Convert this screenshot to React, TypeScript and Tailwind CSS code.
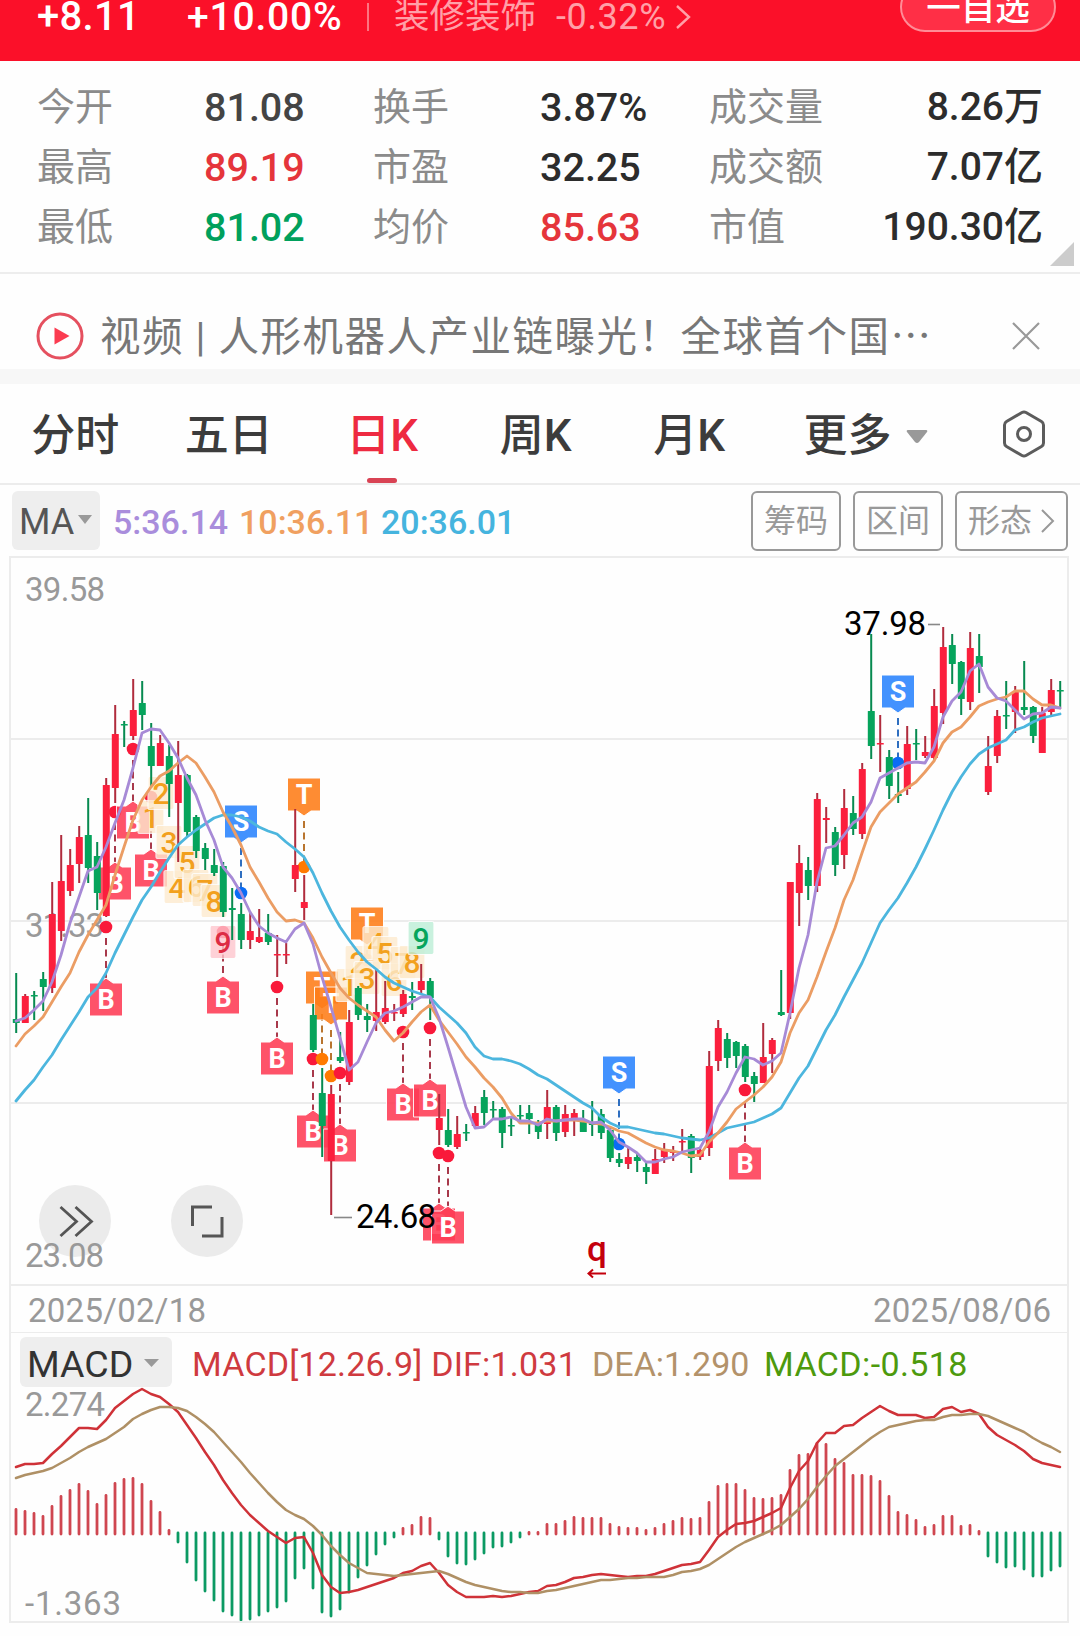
const RED = "#fb1f3d"
const GREEN = "#06a45c"

// x of the n-th trading day
const px = (i: number) => 16 + 9 * i

// colour, high, body top, body bottom, low
const candles: [string, number, number, number, number][] = [
    ["g", 973, 1019, 1023, 1033], ["r", 994, 996, 1023, 1023], ["g", 991, 995, 996, 1020], ["g", 972, 979, 987, 1011],
    ["r", 882, 914, 988, 993], ["r", 835, 881, 931, 941], ["r", 849, 865, 891, 896], ["r", 826, 837, 864, 883],
    ["g", 798, 835, 868, 883], ["g", 842, 856, 893, 910], ["r", 778, 785, 916, 917], ["r", 705, 734, 788, 803],
    ["g", 721, 724, 725, 747], ["r", 679, 710, 736, 740], ["g", 681, 703, 715, 730], ["g", 723, 746, 766, 787],
    ["r", 735, 743, 766, 766], ["g", 745, 756, 784, 817], ["r", 741, 775, 803, 862], ["g", 774, 775, 832, 837],
    ["g", 815, 817, 851, 858], ["g", 843, 848, 859, 870], ["g", 849, 865, 873, 876], ["g", 862, 866, 912, 917],
    ["g", 888, 908, 910, 940], ["g", 903, 914, 940, 949], ["r", 913, 931, 940, 949], ["r", 909, 937, 942, 943],
    ["g", 914, 933, 942, 945], ["r", 935, 954, 955, 977], ["r", 943, 954, 955, 964], ["r", 809, 865, 879, 892],
    ["r", 875, 902, 908, 920], ["g", 1004, 1015, 1050, 1052], ["g", 1068, 1093, 1126, 1157], ["r", 1085, 1094, 1161, 1215],
    ["g", 1032, 1057, 1061, 1063], ["r", 1010, 1022, 1082, 1085], ["g", 986, 988, 1015, 1020], ["g", 1004, 1016, 1020, 1032],
    ["r", 970, 1012, 1021, 1031], ["r", 981, 1008, 1022, 1024], ["r", 1004, 1012, 1013, 1021], ["r", 990, 994, 1014, 1017],
    ["g", 982, 996, 998, 1010], ["r", 964, 981, 990, 993], ["g", 978, 981, 998, 1020], ["r", 1094, 1118, 1130, 1145],
    ["g", 1109, 1130, 1145, 1147], ["r", 1116, 1134, 1147, 1149], ["g", 1124, 1132, 1133, 1141], ["r", 1106, 1113, 1126, 1128],
    ["g", 1090, 1097, 1113, 1125], ["g", 1101, 1109, 1110, 1120], ["g", 1107, 1109, 1133, 1148], ["g", 1118, 1125, 1126, 1136],
    ["g", 1105, 1115, 1116, 1123], ["g", 1105, 1113, 1119, 1134], ["g", 1120, 1122, 1132, 1139], ["r", 1090, 1107, 1124, 1139],
    ["g", 1105, 1107, 1133, 1141], ["r", 1105, 1114, 1132, 1137], ["r", 1109, 1113, 1120, 1136], ["g", 1110, 1120, 1132, 1132],
    ["g", 1101, 1123, 1125, 1136], ["g", 1109, 1114, 1133, 1139], ["g", 1127, 1130, 1158, 1162], ["g", 1153, 1159, 1163, 1167],
    ["r", 1147, 1157, 1164, 1169], ["g", 1153, 1157, 1161, 1172], ["g", 1162, 1167, 1172, 1184], ["r", 1149, 1159, 1174, 1174],
    ["r", 1143, 1149, 1157, 1163], ["r", 1146, 1151, 1153, 1161], ["r", 1129, 1141, 1142, 1153], ["g", 1134, 1136, 1158, 1173],
    ["r", 1147, 1150, 1157, 1160], ["r", 1051, 1066, 1148, 1156], ["r", 1020, 1028, 1061, 1071], ["g", 1033, 1039, 1058, 1068],
    ["g", 1041, 1042, 1056, 1068], ["g", 1044, 1046, 1077, 1082], ["g", 1072, 1076, 1084, 1102], ["r", 1023, 1057, 1083, 1083],
    ["r", 1038, 1040, 1054, 1073], ["g", 970, 1012, 1015, 1016], ["r", 882, 882, 1013, 1019], ["r", 845, 863, 893, 926],
    ["g", 857, 870, 886, 900], ["r", 793, 799, 886, 892], ["r", 807, 818, 820, 843], ["g", 827, 832, 865, 876],
    ["r", 789, 808, 855, 869], ["g", 796, 813, 829, 835], ["r", 763, 769, 834, 839], ["g", 634, 711, 746, 759],
    ["r", 715, 743, 744, 772], ["g", 750, 757, 786, 799], ["g", 772, 794, 796, 803], ["r", 726, 744, 789, 795],
    ["g", 729, 743, 744, 760], ["r", 736, 752, 756, 758], ["r", 689, 706, 758, 760], ["r", 627, 647, 713, 724],
    ["g", 634, 645, 664, 684], ["g", 661, 662, 699, 715], ["r", 632, 648, 702, 710], ["g", 634, 656, 667, 693],
    ["r", 736, 766, 792, 795], ["r", 710, 716, 756, 763], ["g", 681, 715, 716, 729], ["r", 686, 692, 712, 733],
    ["g", 661, 707, 710, 715], ["g", 706, 707, 736, 743], ["r", 707, 713, 753, 753], ["r", 679, 690, 712, 717],
    ["g", 681, 690, 691, 707],
]

const ma5 = [
    1021, 1018, 1010, 1001, 982, 955, 923, 897, 871, 867, 847, 823, 800, 768, 733, 729, 730, 743, 758, 778,
    795, 820, 840, 867, 878, 893, 912, 926, 933, 938, 942, 929, 923, 944, 977, 1007, 1038, 1070, 1062, 1042,
    1023, 1013, 1011, 1007, 1002, 997, 997, 1018, 1047, 1077, 1107, 1128, 1127, 1119, 1119, 1117, 1121, 1121, 1125, 1119,
    1121, 1120, 1119, 1119, 1123, 1122, 1130, 1142, 1147, 1153, 1162, 1162, 1159, 1157, 1152, 1150, 1148, 1132, 1107, 1092,
    1073, 1057, 1059, 1065, 1061, 1053, 1013, 968, 935, 882, 848, 846, 835, 823, 817, 802, 778, 773, 768, 763,
    762, 763, 747, 717, 701, 692, 671, 664, 687, 698, 701, 710, 719, 714, 713, 707, 708,
]

const ma10 = [
    1046, 1034, 1026, 1017, 1002, 987, 973, 952, 935, 920, 905, 875, 847, 820, 800, 787, 776, 771, 763, 756,
    763, 777, 792, 812, 827, 845, 867, 882, 898, 912, 921, 920, 923, 938, 957, 973, 988, 998, 1005, 1011,
    1017, 1030, 1041, 1033, 1022, 1012, 1005, 1020, 1032, 1044, 1057, 1067, 1078, 1087, 1098, 1113, 1123, 1123, 1123, 1121,
    1121, 1120, 1120, 1121, 1123, 1124, 1127, 1131, 1133, 1138, 1143, 1147, 1150, 1151, 1153, 1156, 1155, 1142, 1133, 1122,
    1109, 1102, 1095, 1087, 1077, 1062, 1033, 1013, 1000, 977, 952, 928, 900, 880, 853, 827, 812, 803, 794, 788,
    782, 772, 761, 743, 732, 727, 717, 706, 702, 699, 697, 691, 691, 699, 705, 705, 708,
]

const ma20 = [
    1101, 1090, 1080, 1067, 1055, 1040, 1026, 1012, 997, 988, 973, 953, 935, 917, 900, 887, 872, 858, 845, 837,
    830, 824, 818, 815, 815, 817, 821, 827, 831, 834, 842, 849, 857, 873, 893, 911, 927, 940, 952, 962,
    969, 977, 983, 987, 991, 994, 997, 1007, 1015, 1023, 1033, 1047, 1056, 1059, 1059, 1061, 1064, 1069, 1075, 1079,
    1085, 1091, 1097, 1103, 1108, 1117, 1123, 1127, 1127, 1129, 1131, 1133, 1134, 1136, 1138, 1139, 1140, 1138, 1133, 1128,
    1126, 1124, 1122, 1118, 1114, 1108, 1093, 1078, 1066, 1048, 1030, 1015, 997, 980, 963, 943, 923, 910, 898, 883,
    867, 849, 830, 810, 792, 777, 764, 754, 748, 744, 740, 730, 727, 722, 718, 716, 714,
]

const macd = [
    26, 24, 22, 19, 29, 39, 45, 51, 44, 31, 40, 52, 56, 57, 51, 34, 23, 5,
    -11, -31, -49, -60, -69, -80, -84, -89, -88, -84, -80, -76, -70, -47, -37, -57, -81, -85, -78, -61, -46, -34, -23, -13, -6,
    7, 10, 18, 17, -8, -25, -32, -33, -28, -22, -16, -15, -11, -6,
    3, 3, 11, 11, 14, 18, 17, 17, 17, 11, 8, 7, 7, 5, 7, 11, 14, 17, 16, 17, 33, 49, 51, 51, 45, 37, 36, 37, 40, 65, 80, 81, 92, 91,
    76, 72, 60, 60, 59, 54, 39, 23, 20, 15, 8, 10, 19, 19, 9, 10, 4,
    -25, -31, -36, -35, -38, -45, -45, -39, -35,
]

const dif = [
    1467, 1464, 1464, 1463, 1454, 1446, 1437, 1428, 1428, 1429, 1420, 1408, 1401, 1394, 1389, 1394, 1397, 1404, 1412, 1425,
    1438, 1452, 1465, 1480, 1493, 1505, 1515, 1523, 1531, 1537, 1543, 1538, 1537, 1553, 1575, 1587, 1593, 1592, 1590, 1587,
    1584, 1581, 1578, 1573, 1571, 1566, 1563, 1573, 1585, 1592, 1597, 1597, 1597, 1596, 1597, 1596, 1594, 1592, 1591, 1586,
    1585, 1582, 1578, 1577, 1575, 1574, 1575, 1576, 1577, 1576, 1576, 1574, 1571, 1568, 1565, 1564, 1562, 1550, 1537, 1530,
    1524, 1523, 1521, 1517, 1513, 1508, 1488, 1471, 1461, 1443, 1433, 1433, 1426, 1425, 1418, 1412, 1406, 1411, 1415, 1415,
    1415, 1418, 1417, 1409, 1407, 1412, 1410, 1414, 1427, 1435, 1440, 1445, 1451, 1459, 1463, 1465, 1467,
]

const dea = [
    1478, 1475, 1473, 1471, 1468, 1463, 1458, 1452, 1447, 1443, 1439, 1433, 1427, 1419, 1414, 1410, 1407, 1407, 1408, 1411,
    1417, 1424, 1432, 1442, 1452, 1462, 1473, 1483, 1493, 1502, 1510, 1515, 1519, 1526, 1535, 1546, 1555, 1563, 1568, 1573,
    1574, 1575, 1576, 1575, 1574, 1573, 1572, 1571, 1574, 1578, 1582, 1585, 1587, 1589, 1591, 1592, 1592, 1593, 1593, 1591,
    1590, 1588, 1586, 1584, 1582, 1580, 1580, 1579, 1578, 1578, 1577, 1577, 1577, 1575, 1572, 1571, 1569, 1565, 1559, 1553,
    1547, 1542, 1538, 1534, 1530, 1525, 1517, 1509, 1499, 1487, 1476, 1466, 1459, 1452, 1445, 1438, 1432, 1427, 1425, 1423,
    1421, 1420, 1420, 1417, 1415, 1415, 1414, 1414, 1416, 1420, 1424, 1428, 1432, 1438, 1443, 1447, 1452,
]

// kind, centre x, badge top, y of the dot it points at
const marks: [string, number, number, number][] = [
    ["B", 106, 983, 927], ["B", 115, 867, 812], ["B", 133, 806, 749], ["B", 151, 854, 797], ["B", 223, 981, 932],
    ["S", 241, 805, 893], ["T", 304, 778, 867], ["B", 277, 1042, 987], ["B", 313, 1115, 1059], ["T", 322, 971, 1059],
    ["T", 331, 987, 1076], ["B", 340, 1129, 1073], ["T", 367, 907, 960], ["B", 403, 1088, 1032], ["B", 430, 1084, 1028],
    ["B", 439, 1208, 1153], ["B", 448, 1211, 1156], ["S", 619, 1056, 1144], ["B", 745, 1147, 1090], ["S", 898, 675, 763],
]

const markColors: any = {
    B: { box: "#ff3c55", dot: "#f9193a", line: "#a8394b" },
    S: { box: "#2a84ff", dot: "#0a6cf5", line: "#2f6fc0" },
    T: { box: "#ff7d18", dot: "#ff7a00", line: "#b9752f" },
}

const counts: [string, number, number][] = [
    ["1", 151, 817], ["2", 161, 793], ["3", 169, 842], ["4", 177, 887], ["5", 187, 862], ["6", 196, 886], ["7", 205, 890], ["8", 214, 901], ["9", 223, 942],
    ["1", 349, 985], ["2", 358, 962], ["3", 367, 978], ["4", 376, 943], ["5", 385, 953], ["6", 394, 980], ["7", 403, 963], ["8", 412, 962], ["9", 421, 938],
]

function Label({ x, y, w, color = "#999", children }: { x: number, y: number, w: number, color?: string, children: string }) {
    return <text x={x} y={y} textLength={w} lengthAdjust="spacing" fill={color} className="text-[33px]">{children}</text>
}

function Line({ data, color, width = 2.8 }: { data: number[], color: string, width?: number }) {
    return <polyline points={data.map((y, i) => `${px(i)},${y}`).join(" ")} fill="none" stroke={color} strokeWidth={width} strokeLinejoin="round" strokeLinecap="round" />
}

function Mark({ kind, x, top, dot }: { kind: string, x: number, top: number, dot: number }) {
    const c = markColors[kind]
    const below = kind === "B"
    return <g>
        <line x1={x} x2={x} y1={below ? dot + 11 : top + 43} y2={below ? top - 5 : dot - 6} stroke={c.line} strokeWidth="2" strokeDasharray="7 4.5" />
        <circle cx={x} cy={dot} r="6.3" fill={c.dot} />
        <path
            d={below
                ? `M${x - 16.5} ${top}h9.500l7 -5l7 5h9.500v33h-33z`
                : `M${x - 16.5} ${top}h33v33h-9.500l-7 5l-7 -5h-9.500z`}
            fill={c.box} stroke="#fff" strokeWidth="1" strokeLinejoin="round" opacity="0.88" />
        <text x={x} y={top + 25.5} textAnchor="middle" fill="#fff" className="text-[27px] font-bold">{kind}</text>
    </g>
}

function Count({ n, x, y }: { n: string, x: number, y: number }) {
    let box = "#fdebcf"
    let color = "#f2a01d"
    if (n === "9") {
        box = y < 940 ? "#bdeed7" : "#ffc6ce"
        color = y < 940 ? "#06a45c" : "#dd2b43"
    }
    return <g>
        <rect x={x - 13} y={y - 16.5} width="26" height="33" rx="2" fill={box} stroke="#fff" strokeWidth="1.2" opacity="0.8" />
        <text x={x} y={y + 10.5} textAnchor="middle" fill={color} className="text-[30px] font-medium">{n}</text>
    </g>
}

function PriceChart() {
    return <svg viewBox="11 558 1056 726" className="block w-[1056px] h-[726px]">
        {[739, 921, 1103].map(y => <line key={y} x1="11" x2="1067" y1={y} y2={y} stroke="#ececec" strokeWidth="2" />)}
        <Label x={25} y={601} w={80}>39.58</Label>
        <Label x={25} y={937} w={79}>31.33</Label>
        {marks.map(([kind, x, top, dot], i) => <Mark key={i} kind={kind} x={x} top={top} dot={dot} />)}
        {counts.map(([n, x, y], i) => <Count key={i} n={n} x={x} y={y} />)}
        {candles.map(([c, high, top, bottom, low], i) => <g key={i} fill={c === "r" ? RED : GREEN}>
            <rect x={px(i) - 0.8} y={high} width="2" height={low - high} fill={c === "r" ? "#b02c3d" : "#078a50"} />
            <rect x={px(i) - 3.2} y={top} width="7" height={Math.max(bottom - top, 1.5)} rx="0.5" />
        </g>)}
        <Line data={ma20} color="#4cb6de" />
        <Line data={ma10} color="#eb9d64" />
        <Line data={ma5} color="#a78ad6" />
        <line x1="928" x2="940" y1="624.5" y2="624.5" stroke="#888" strokeWidth="1.6" />
        <Label x={844} y={635} w={82} color="#000">37.98</Label>
        <line x1="334" x2="352" y1="1217.5" y2="1217.5" stroke="#888" strokeWidth="1.6" />
        <Label x={356} y={1228} w={80} color="#000">24.68</Label>
        <text x="587" y="1261" fill="#c4000c" className="text-[35px] font-medium">q</text>
        <path d="M606 1273.500H589M593 1269.500l-4.500 4l4.500 4" fill="none" stroke="#c4000c" strokeWidth="2" />
        <circle cx="75" cy="1221" r="36" fill="#ebebeb" />
        <path d="M60.500 1207l16 14.500l-16 14.500M75.500 1207l16 14.500l-16 14.500" fill="none" stroke="#555" strokeWidth="2.800" />
        <circle cx="207" cy="1221" r="36" fill="#ebebeb" />
        <path d="M192.500 1226v-19h19.500M202 1236h20v-19" fill="none" stroke="#555" strokeWidth="3" />
        <Label x={25} y={1267} w={79}>23.08</Label>
    </svg>
}

function MacdChart() {
    return <svg viewBox="11 1387 1056 234" className="block w-[1056px] h-[234px]">
        <Label x={25} y={1416} w={80}>2.274</Label>
        <Label x={25} y={1615} w={96}>-1.363</Label>
        {macd.map((v, i) => <line key={i} x1={px(i)} x2={px(i)} y1={v > 0 ? 1534 : 1533} y2={v > 0 ? 1535.5 - v : 1531 - v} stroke={v > 0 ? "#cf4650" : "#0b9a63"} strokeWidth="2.8" strokeLinecap="round" />)}
        <Line data={dif} color="#cf3238" width={2.5} />
        <Line data={dea} color="#af9065" width={2.5} />
    </svg>
}

function Quote({ label, value, color = "text-[#2c2c2c]", right = false }: { label: string, value: string, color?: string, right?: boolean }) {
    return <div className="flex items-center h-[60px]">
        <span className={right ? "w-[140px] text-[38px] text-[#8b8b8b]" : "w-[167px] text-[38px] text-[#8b8b8b]"}>{label}</span>
        <span className={`${color} ${right ? "flex-1 text-right text-[39px]" : "text-[39.500px]"} pt-px font-medium whitespace-nowrap`}>{value}</span>
    </div>
}

const tabs = ["分时", "五日", "日K", "周K", "月K"]

export default function App() {

    return <div className="w-[1080px] h-[1636px] overflow-hidden bg-[#fefefe] font-['Roboto','Noto_Sans_CJK_SC',sans-serif] leading-none">
        <div className="flex items-start h-[61px] bg-[#fb1029] text-white overflow-hidden">
            <div className="flex items-center w-[900px] h-[34px] pl-[37px] whitespace-nowrap">
                <span className="w-[150px] text-[40px] font-medium tracking-[0.3px]">+8.11</span>
                <span className="w-[180px] text-[39px] font-medium tracking-[0.8px]">+10.00%</span>
                <span className="w-[2px] h-7 bg-[#fd7480]"></span>
                <span className="ml-[25px] w-[162px] text-[35.500px] text-[#ffa0a8]">装修装饰</span>
                <span className="text-[36px] tracking-[0.6px] text-[#ffa0a8]">-0.32%</span>
                <svg viewBox="0 0 16 26" className="ml-[9px] w-4 h-[26px]"><path d="M2 2l12 11L2 24" fill="none" stroke="#ffa0a8" strokeWidth="2.4" /></svg>
            </div>
            <div className="flex items-center justify-center w-[156px] h-[50px] -mt-[18px] pt-[3px] rounded-full border-2 border-[#ff8c97] bg-[#ff2f46] text-[34.500px] font-medium">一自选</div>
        </div>

        <div className="relative h-[213px] pt-[16px] px-[37px] border-b-2 border-[#ededed]">
            <div className="grid grid-cols-[336px_336px_334px]">
                <Quote label="今开" value="81.08" color="text-[#444]" />
                <Quote label="换手" value="3.87%" />
                <Quote label="成交量" value="8.26万" right />
                <Quote label="最高" value="89.19" color="text-[#e5353b]" />
                <Quote label="市盈" value="32.25" />
                <Quote label="成交额" value="7.07亿" right />
                <Quote label="最低" value="81.02" color="text-[#00a05c]" />
                <Quote label="均价" value="85.63" color="text-[#e5353b]" />
                <Quote label="市值" value="190.30亿" right />
            </div>
            <svg viewBox="0 0 24 24" className="absolute left-[1050px] top-[181px] w-6 h-6"><path d="M24 0v24H0z" fill="#ccc" /></svg>
        </div>

        <div className="flex items-center h-[95px] pt-[28px] pl-[36px] whitespace-nowrap">
            <svg viewBox="0 0 48 48" className="w-12 h-12">
                <circle cx="24" cy="24" r="22" fill="none" stroke="#e5505f" strokeWidth="3" />
                <path d="M18.500 15.500v17l15 -8.500z" fill="#fb3b50" />
            </svg>
            <span className="ml-4 w-[912px] text-[40.500px] tracking-[1.5px] text-[#777]">视频 | 人形机器人产业链曝光！全球首个国<span className="font-['Noto_Sans_CJK_SC']">…</span></span>
            <svg viewBox="0 0 28 28" className="w-7 h-7"><path d="M1 1l26 26M27 1L1 27" stroke="#999" strokeWidth="2.2" /></svg>
        </div>
        <div className="h-[15px] bg-[#f7f7f7]"></div>

        <div className="flex h-[101px] border-b-2 border-[#ececec] text-[#3c3c3c] text-[44px] font-medium">
            {tabs.map(t => <div key={t} className={t === "日K" ? "relative flex items-center justify-center w-[153.500px] pt-[5px] pr-[3px] text-[#ee2a41]" : "flex items-center justify-center w-[153.500px] pt-[5px] pr-[3px]"}>
                {t}
                {t === "日K" && <span className="absolute bottom-0 w-[30px] h-[5px] rounded-sm bg-[#d94354]"></span>}
            </div>)}
            <div className="flex items-center w-[234px] pl-[36px] pt-[5px]">
                更多
                <svg viewBox="0 0 22 13" className="ml-[14px] w-[22px] h-[13px]"><path d="M2 0h18q2 0 1 2l-8 10q-2 2-4 0l-8-10q-1-2 1-2z" fill="#999" /></svg>
            </div>
            <div className="flex items-center">
                <svg viewBox="0 0 44 48" className="w-11 h-12" fill="none" stroke="#5c5c5c" strokeWidth="3">
                    <path d="M20 2.500q2-1.200 4 0l15.500 9q2 1.200 2 3.500v18q0 2.300-2 3.500l-15.500 9q-2 1.200-4 0l-15.500-9q-2-1.200-2-3.500v-18q0-2.300 2-3.500z" />
                    <circle cx="22" cy="24" r="6.500" />
                </svg>
            </div>
        </div>

        <div className="flex items-center h-[71px] pl-3 pr-3 whitespace-nowrap">
            <div className="flex items-center w-[88px] h-[59px] pl-[7px] pt-[2px] rounded-md bg-[#eee] text-[36px] text-[#555]">
                MA
                <svg viewBox="0 0 14 9" className="ml-1 mb-1 w-[14px] h-[9px]"><path d="M0 0h14l-7 9z" fill="#999" /></svg>
            </div>
            <span className="ml-[13px] w-[126px] pt-[3px] text-[34px] font-medium text-[#a98ddc]">5:36.14</span>
            <span className="w-[142px] pt-[3px] text-[34px] font-medium text-[#f0a060]">10:36.11</span>
            <span className="flex-1 pt-[3px] text-[34px] font-medium text-[#45b4de]">20:36.01</span>
            <div className="flex gap-3 text-[32px] text-[#999]">
                <div className="flex items-center justify-center w-[90px] h-[60px] rounded-md border-2 border-[#999]">筹码</div>
                <div className="flex items-center justify-center w-[90px] h-[60px] rounded-md border-2 border-[#999]">区间</div>
                <div className="flex items-center justify-center w-[113px] h-[60px] rounded-md border-2 border-[#999]">
                    形态
                    <svg viewBox="0 0 14 24" className="ml-[9px] w-[14px] h-6"><path d="M1 1l11 11L1 23" fill="none" stroke="#999" strokeWidth="2" /></svg>
                </div>
            </div>
        </div>

        <div className="ml-[9px] w-[1060px] border-2 border-[#ececec]">
            <PriceChart />
            <div className="h-[49px] border-t-2 border-b border-[#ececec]">
                <svg viewBox="11 1286 1056 46" className="block w-[1056px] h-[46px]">
                    <Label x={28} y={1322} w={178}>2025/02/18</Label>
                    <Label x={873} y={1322} w={178}>2025/08/06</Label>
                </svg>
            </div>
            <div className="flex items-center h-[54px] pl-[9px] pt-[4px] pb-0 whitespace-nowrap text-[34px]">
                <div className="flex items-center w-[152px] h-[50px] pl-[7px] pt-[5px] rounded-md bg-[#eee] text-[37.500px] text-[#333]">
                    MACD
                    <svg viewBox="0 0 15 8" className="ml-[11px] mb-1 w-[15px] h-2"><path d="M0 0h15l-7.500 8z" fill="#999" /></svg>
                </div>
                <span className="ml-[20px] w-[400px] pt-[4px] tracking-[0.2px] text-[#cf3a3f]">MACD[12.26.9] DIF:1.031</span>
                <span className="w-[172px] pt-[4px] text-[#b3926a]">DEA:1.290</span>
                <span className="pt-[4px] tracking-[0.4px] text-[#4d9a0d]">MACD:-0.518</span>
            </div>
            <MacdChart />
        </div>
    </div>
}
